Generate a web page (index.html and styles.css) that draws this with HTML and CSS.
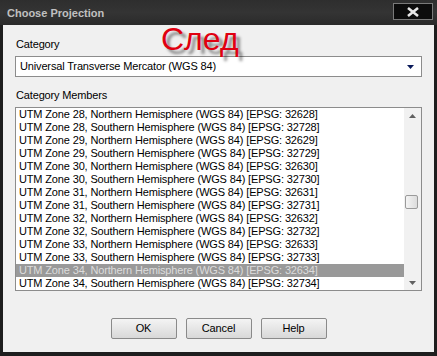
FILE: index.html
```html
<!DOCTYPE html>
<html>
<head>
<meta charset="utf-8">
<link rel="stylesheet" href="styles.css">
</head>
<body>
<div class="window">
  <div class="titlebar">
    <span class="title">Choose Projection</span>
    <div class="close"><svg width="14" height="10" viewBox="0 0 14 10"><path d="M2 1 L12 9 M12 1 L2 9" stroke="#e8e8e8" stroke-width="2.6"/></svg></div>
  </div>
  <div class="content">
    <div class="overlay">След</div>
    <div class="label">Category</div>
    <div class="combo">
      <span>Universal Transverse Mercator (WGS 84)</span>
      <svg class="arrow" width="7" height="4" viewBox="0 0 7 4"><path d="M0 0 H7 L3.5 4 Z" fill="#0a1a5a"/></svg>
    </div>
    <div class="label label2">Category Members</div>
    <div class="list">
      <div class="items">
        <div class="item">UTM Zone 28, Northern Hemisphere (WGS 84) [EPSG: 32628]</div>
        <div class="item">UTM Zone 28, Southern Hemisphere (WGS 84) [EPSG: 32728]</div>
        <div class="item">UTM Zone 29, Northern Hemisphere (WGS 84) [EPSG: 32629]</div>
        <div class="item">UTM Zone 29, Southern Hemisphere (WGS 84) [EPSG: 32729]</div>
        <div class="item">UTM Zone 30, Northern Hemisphere (WGS 84) [EPSG: 32630]</div>
        <div class="item">UTM Zone 30, Southern Hemisphere (WGS 84) [EPSG: 32730]</div>
        <div class="item">UTM Zone 31, Northern Hemisphere (WGS 84) [EPSG: 32631]</div>
        <div class="item">UTM Zone 31, Southern Hemisphere (WGS 84) [EPSG: 32731]</div>
        <div class="item">UTM Zone 32, Northern Hemisphere (WGS 84) [EPSG: 32632]</div>
        <div class="item">UTM Zone 32, Southern Hemisphere (WGS 84) [EPSG: 32732]</div>
        <div class="item">UTM Zone 33, Northern Hemisphere (WGS 84) [EPSG: 32633]</div>
        <div class="item">UTM Zone 33, Southern Hemisphere (WGS 84) [EPSG: 32733]</div>
        <div class="item selected">UTM Zone 34, Northern Hemisphere (WGS 84) [EPSG: 32634]</div>
        <div class="item">UTM Zone 34, Southern Hemisphere (WGS 84) [EPSG: 32734]</div>
      </div>
      <div class="scrollbar">
        <svg class="sarrow" width="7" height="4" viewBox="0 0 7 4"><path d="M3.5 0 L7 4 H0 Z" fill="#606060"/></svg>
        <div class="track"><div class="thumb"></div></div>
        <svg class="sarrow" width="7" height="4" viewBox="0 0 7 4"><path d="M0 0 H7 L3.5 4 Z" fill="#606060"/></svg>
      </div>
    </div>
    <div class="buttons">
      <div class="btn">OK</div>
      <div class="btn">Cancel</div>
      <div class="btn">Help</div>
    </div>
  </div>
</div>
</body>
</html>
```
FILE: styles.css
```css
html, body {
  margin: 0;
  padding: 0;
  background: #1c1c1c;
}
body {
  width: 437px;
  height: 356px;
  overflow: hidden;
  font-family: "Liberation Sans", Arial, sans-serif;
  font-size: 11px;
  letter-spacing: -0.15px;
  color: #000;
}
.window {
  width: 437px;
  height: 356px;
  box-sizing: border-box;
  padding: 0 3px 4px 3px;
  background: #1e1e1e;
  display: flex;
  flex-direction: column;
}
.titlebar {
  height: 25px;
  flex: none;
  display: flex;
  align-items: flex-start;
  justify-content: space-between;
  background: linear-gradient(#2e2e2e, #343434 50%, #2a2a2a);
  margin: 0 -3px;
  padding: 0 3px 0 7px;
}
.title {
  font-family: "Liberation Sans", Arial, sans-serif;
  font-weight: bold;
  font-size: 11px;
  color: #c0c0c0;
  margin-top: 7px;
  letter-spacing: 0;
}
.close {
  width: 40px;
  height: 17px;
  margin-top: 3px;
  margin-right: 1px;
  box-sizing: border-box;
  border: 1px solid #7a7a7a;
  background: #0c0c0c;
  display: flex;
  align-items: center;
  justify-content: center;
}
.content {
  flex: 1;
  background: #f0f0f0;
  position: relative;
  padding: 13px 12px 0 12px;
  box-sizing: border-box;
}
.overlay {
  position: absolute;
  left: 158px;
  top: -3px;
  font-family: "Liberation Sans", Arial, sans-serif;
  font-size: 32px;
  letter-spacing: 0;
  color: #e00010;
  text-shadow: 4px 4px 3px rgba(0,0,0,0.45);
  line-height: 34px;
  z-index: 2;
}
.label {
  height: 13px;
  line-height: 13px;
  padding-left: 1px;
}
.combo {
  margin-top: 5px;
  height: 21px;
  box-sizing: border-box;
  border: 1px solid #8c8c8c;
  background: #fff;
  display: flex;
  align-items: center;
  justify-content: space-between;
  padding: 0 7px 0 4px;
}
.combo span {
  line-height: 13px;
}
.label2 {
  margin-top: 12px;
}
.list {
  margin-top: 5px;
  height: 184px;
  box-sizing: border-box;
  border: 1px solid #8c8c8c;
  background: #fff;
  display: flex;
}
.items {
  flex: 1;
}
.item {
  height: 13px;
  line-height: 13px;
  padding-left: 3px;
  white-space: nowrap;
  overflow: hidden;
}
.item.selected {
  background: #999999;
  color: #dcdcdc;
}
.scrollbar {
  width: 17px;
  flex: none;
  background: #f1f1f1;
  display: flex;
  flex-direction: column;
  align-items: center;
  padding: 6px 0 5px 0;
  box-sizing: border-box;
}
.sarrow {
  flex: none;
}
.track {
  flex: 1;
  width: 100%;
  position: relative;
}
.thumb {
  position: absolute;
  left: 1px;
  width: 13px;
  top: 77px;
  height: 14px;
  box-sizing: border-box;
  border: 1px solid #9a9a9a;
  border-radius: 2px;
  background: linear-gradient(90deg, #f4f4f4, #dcdcdc);
}
.buttons {
  display: flex;
  justify-content: center;
  gap: 9px;
  margin-top: 27px;
}
.btn {
  width: 66px;
  height: 21px;
  box-sizing: border-box;
  border: 1px solid #8a8a8a;
  border-radius: 2px;
  background: linear-gradient(#f4f4f4, #e6e6e6 50%, #d8d8d8);
  display: flex;
  align-items: center;
  justify-content: center;
  line-height: 13px;
}
```
